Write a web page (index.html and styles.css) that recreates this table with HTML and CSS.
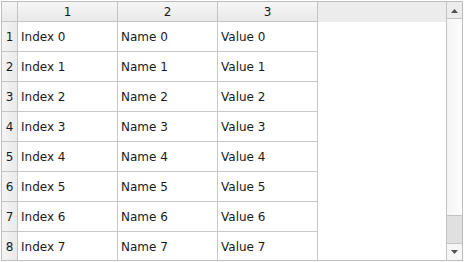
FILE: index.html
```html
<!DOCTYPE html>
<html>
<head>
<meta charset="utf-8">
<link rel="stylesheet" href="styles.css">
</head>
<body>
<div class="view">
  <div class="viewport">
    <div class="grid">
      <div class="hcell corner"></div>
      <div class="hcell col">1</div>
      <div class="hcell col">2</div>
      <div class="hcell col">3</div>
      <div class="hcell fill"></div>

      <div class="vh">1</div><div class="cell">Index 0</div><div class="cell">Name 0</div><div class="cell">Value 0</div><div class="blank"></div>
      <div class="vh">2</div><div class="cell">Index 1</div><div class="cell">Name 1</div><div class="cell">Value 1</div><div class="blank"></div>
      <div class="vh">3</div><div class="cell">Index 2</div><div class="cell">Name 2</div><div class="cell">Value 2</div><div class="blank"></div>
      <div class="vh">4</div><div class="cell">Index 3</div><div class="cell">Name 3</div><div class="cell">Value 3</div><div class="blank"></div>
      <div class="vh">5</div><div class="cell">Index 4</div><div class="cell">Name 4</div><div class="cell">Value 4</div><div class="blank"></div>
      <div class="vh">6</div><div class="cell">Index 5</div><div class="cell">Name 5</div><div class="cell">Value 5</div><div class="blank"></div>
      <div class="vh">7</div><div class="cell">Index 6</div><div class="cell">Name 6</div><div class="cell">Value 6</div><div class="blank"></div>
      <div class="vh">8</div><div class="cell">Index 7</div><div class="cell">Name 7</div><div class="cell">Value 7</div><div class="blank"></div>
    </div>
  </div>
  <div class="scrollbar">
    <div class="sb-btn"><svg width="9" height="5" viewBox="0 0 9 5"><path d="M1 5 L4.5 1 L8 5 Z" fill="#505050"/></svg></div>
    <div class="sb-track"><div class="sb-handle"></div></div>
    <div class="sb-btn"><svg width="9" height="5" viewBox="0 0 9 5"><path d="M1 0 L4.5 4 L8 0 Z" fill="#505050"/></svg></div>
  </div>
</div>
</body>
</html>
```
FILE: styles.css
```css
html, body {
  margin: 0;
  padding: 0;
  background: #ffffff;
}
body {
  padding: 1px 0 0 1px;
  width: 465px;
  height: 262px;
  box-sizing: border-box;
  font-family: "DejaVu Sans", sans-serif;
  font-size: 12px;
  color: #1a1a1a;
}
.view {
  width: 462px;
  height: 260px;
  box-sizing: border-box;
  border: 1px solid #bdbdbd;
  display: flex;
  background: #ffffff;
  overflow: hidden;
}
.viewport {
  flex: 1;
  overflow: hidden;
}
.grid {
  display: grid;
  grid-template-columns: 16px 100px 100px 100px 1fr;
  grid-template-rows: 20px repeat(8, 30px);
}
.hcell {
  background: linear-gradient(#f6f6f6, #e9e9e9);
  border-bottom: 1px solid #c4c4c4;
  display: flex;
  align-items: center;
  justify-content: center;
  line-height: 1;
}
.corner, .col {
  border-right: 1px solid #c4c4c4;
}
.fill {
  background: #ececec;
  border-bottom: none;
}
.vh {
  background: linear-gradient(90deg, #f4f4f4, #eaeaea);
  border-right: 1px solid #c4c4c4;
  border-bottom: 1px solid #c4c4c4;
  display: flex;
  align-items: center;
  justify-content: center;
}
.cell {
  border-right: 1px solid #c8c8c8;
  border-bottom: 1px solid #c8c8c8;
  display: flex;
  align-items: center;
  padding-left: 3px;
  white-space: nowrap;
}
.blank {
  background: #ffffff;
}
.scrollbar {
  width: 15px;
  border-left: 1px solid #c4c4c4;
  display: flex;
  flex-direction: column;
  background: linear-gradient(90deg, #f4f4f4, #fdfdfd);
}
.sb-btn {
  height: 16px;
  display: flex;
  align-items: center;
  justify-content: center;
  background: #ececec;
}
.sb-btn:first-child {
  border-bottom: 1px solid #c4c4c4;
}
.sb-btn:last-child {
  border-top: 1px solid #c4c4c4;
  background: #f6f6f6;
}
.sb-track {
  flex: 1;
  display: flex;
  flex-direction: column;
  justify-content: flex-end;
}
.sb-handle {
  height: 27px;
  background: #e0e0e0;
  border-top: 1px solid #c4c4c4;
}
```
